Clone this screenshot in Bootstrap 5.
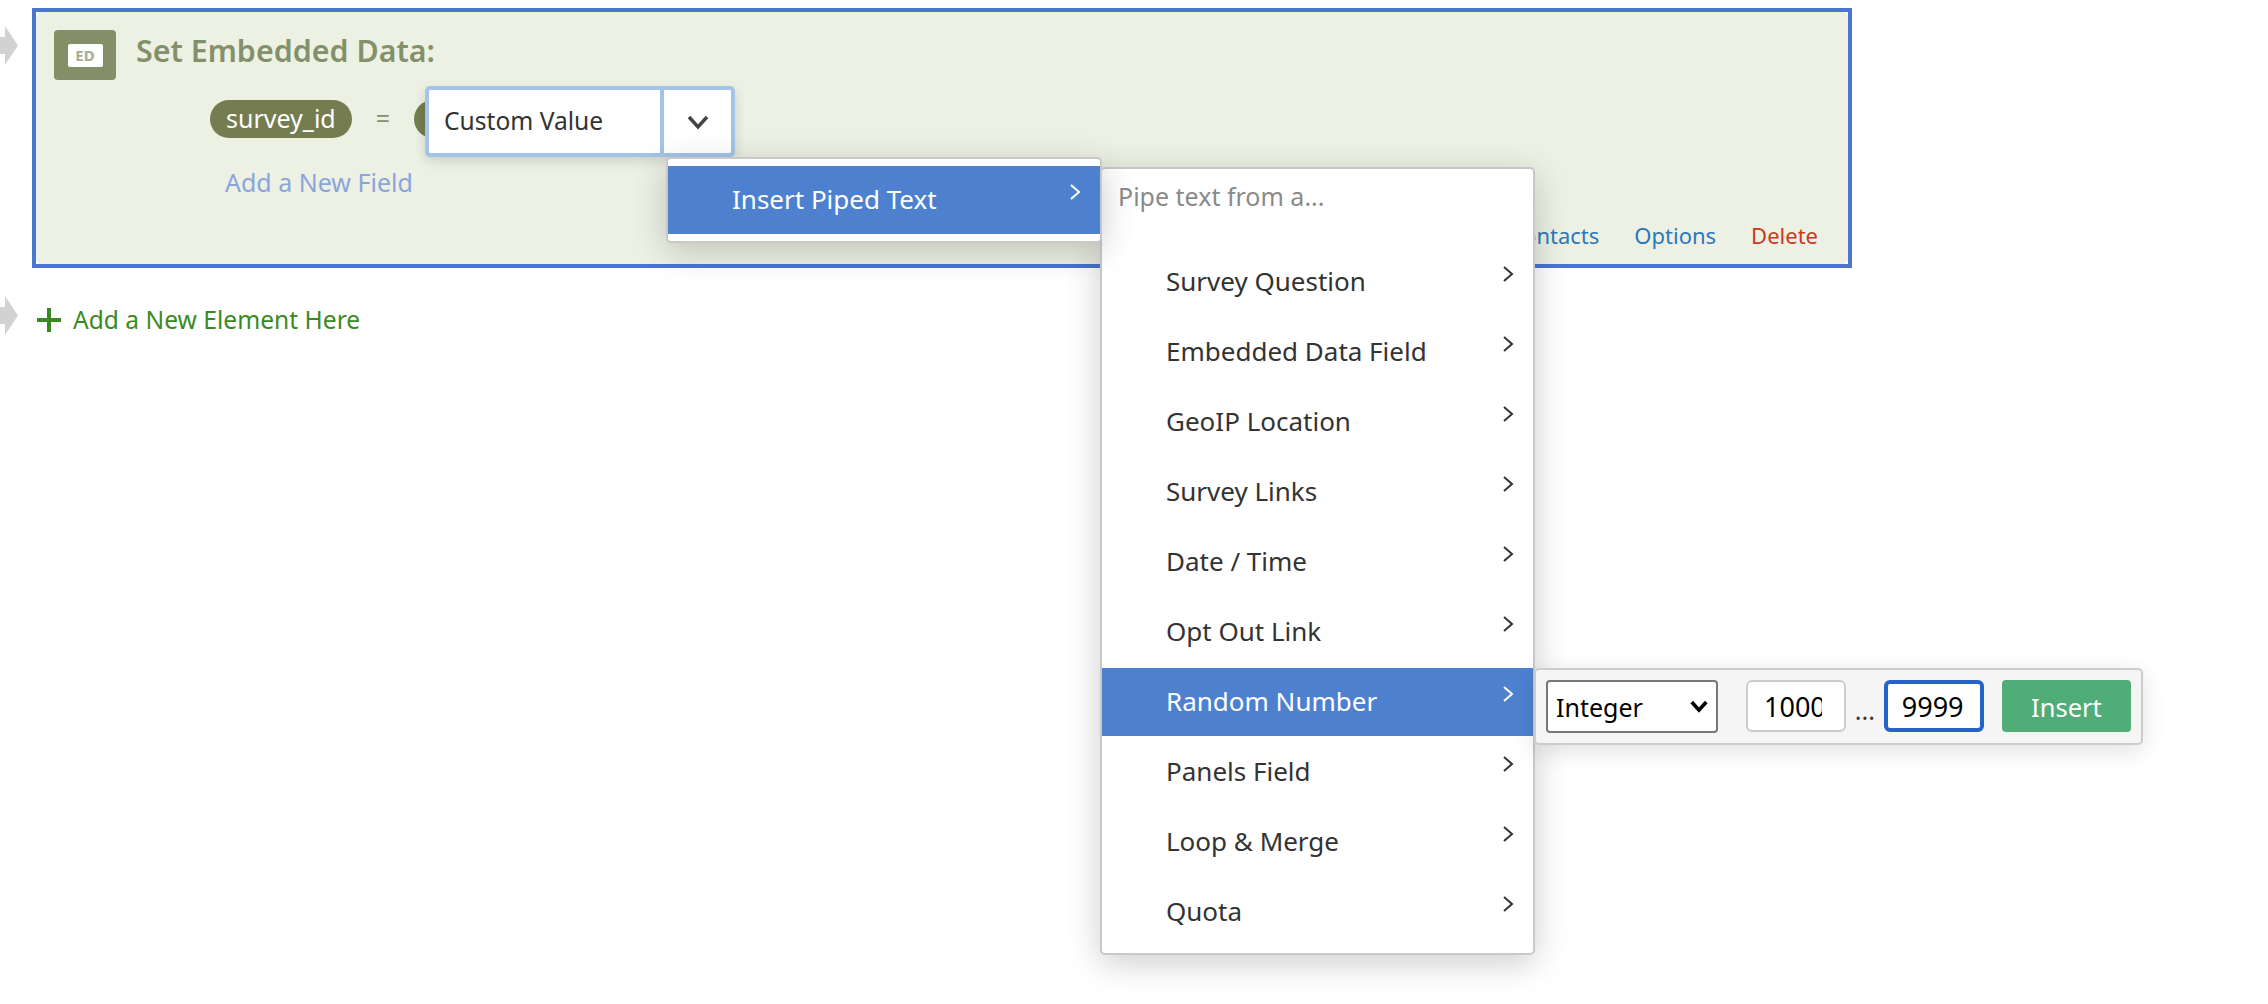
<!DOCTYPE html>
<html lang="en">
<head>
    <meta charset="UTF-8">
    <title>Set Embedded Data</title>
    <link href="https://cdn.jsdelivr.net/npm/bootstrap@5.3.0/dist/css/bootstrap.min.css" rel="stylesheet">
    <style>
        html, body { height: 100%; overflow: hidden; }
        body { font-family: "Noto Sans", "Open Sans", sans-serif; color: #333; background: #fff; }
        .flow-page { position: relative; width: 2268px; height: 1004px; padding-top: 8px; }
        .flow-row { width: 1852px; }
        .flow-arrow { width: 18px; height: 39px; flex: none; margin-right: 14px; fill: #d2d2d2; }
        .flow-arrow-top { margin-top: 18px; }
        .flow-arrow-low { margin-bottom: 8px; }

        .ed-frame { height: 260px; border: 4px solid #4a76d0; background: #fff; }
        .ed-card { height: 100%; border: 0; border-radius: 5px; background: #edf1e4; padding: 18px 30px 14px 18px; }
        .ed-icon { width: 62px; height: 50px; background: #848f68; border-radius: 4px; }
        .ed-icon-label { width: 35px; height: 23px; background: #fff; border-radius: 2px; color: #a4ad8e; font-size: 15px; font-weight: 700; line-height: 23px; text-align: center; }
        .ed-title { margin: 2px 0 0 20px; font-size: 30.400px; font-weight: 600; line-height: 38px; color: #83906a; }
        .field-row { margin: 20px 0 0 156px; height: 38px; }
        .field-pill { height: 38px; padding: 0 16px; border-radius: 19px; background: #747c50; color: #fff; font-size: 25px; line-height: 36px; }
        .field-pill-under { width: 60px; }
        .field-eq { margin: 0 24px; font-size: 25px; color: #83906a; }
        .add-field { display: block; margin: 27px 0 0 171px; font-size: 25px; line-height: 34px; color: #8ba4dc; text-decoration: none; }
        .ed-actions { margin-top: auto; font-size: 22px; line-height: 30px; gap: 35px; }
        .ed-actions a { color: #2b78bd; text-decoration: none; }
        .ed-actions a.del-link { color: #c83a1c; }

        .add-element { margin-top: 28px; }
        .add-element a { color: #3a8a22; font-size: 24.600px; line-height: 34px; text-decoration: none; }
        .add-plus { width: 26px; height: 26px; margin: 0 11px 0 4px; stroke: #3a8a22; }

        .value-box { position: absolute; left: 425px; top: 86px; width: 310px; height: 71px; border: 4px solid #a3c3e8; border-radius: 5px; background: #fff; box-shadow: 0 4px 12px rgba(0,0,0,.14); font-size: 24.600px; color: #333; }
        .value-text { width: 235px; padding-left: 15px; line-height: 61px; border-right: 4px solid #a3c3e8; }
        .value-caret { flex: 1; }
        .value-caret svg { width: 24px; height: 16px; stroke: #444; }

        .pipe-menu.dropdown-menu { position: absolute; display: block; margin: 0; min-width: 0; border: 2px solid #c8c8c8; border-radius: 5px; box-shadow: 0 8px 34px rgba(0,0,0,.2); padding: 0; background: #fff; }
        .pipe-first { left: 666px; top: 157px; width: 436px; height: 86px; padding-top: 7px !important; z-index: 3; }
        .pipe-second { left: 1100px; top: 167px; width: 435px; height: 788px; padding-top: 79px !important; z-index: 2; }
        .pipe-search { position: absolute; left: 16px; top: -2px; width: 400px; height: 58px; padding: 0; border: 0; box-shadow: none !important; font-size: 25px; color: #333; background: transparent; }
        .pipe-search::placeholder { color: #8a8a8a; opacity: 1; }
        .pipe-item.dropdown-item { display: flex; align-items: flex-start; justify-content: space-between; height: 68px; margin-bottom: 2px; padding: 11px 19px 0 64px; font-size: 26px; line-height: 44px; color: #333; }
        .pipe-item svg { width: 12px; height: 18px; margin-top: 6px; stroke: currentColor; flex: none; }
        .pipe-item.active { background: #4d81d0; color: #fff; }

        .random-pop { position: absolute; left: 1534px; top: 668px; width: 609px; height: 77px; padding: 10px; background: #f5f5f5; border: 2px solid #ccc; border-radius: 5px; box-shadow: 0 6px 24px rgba(0,0,0,.12); z-index: 4; font-size: 25px; }
        .random-type.form-select { width: 172px; height: 53px; flex: none; margin-right: 28px; padding: 6px 8px 4px; border: 2px solid #777; border-radius: 4px; color: #000; font-size: 25px; background-image: url("data:image/svg+xml,%3csvg xmlns='http://www.w3.org/2000/svg' viewBox='0 0 22 16'%3e%3cpath fill='none' stroke='%23000' stroke-width='4' d='M3 3l8 9 8-9'/%3e%3c/svg%3e"); background-position: right 7px center; background-size: 20px 15px; }
        .random-num.form-control { width: 100px; height: 52px; flex: none; padding: 4px 22px 4px 16px; border: 2px solid #ccc; border-radius: 6px; color: #000; font-size: 27px; }
        .random-num.is-on { border: 4px solid #2563c9; padding: 4px 14px; box-shadow: none; }
        .random-dots { width: 38px; text-align: center; color: #333; line-height: 60px; }
        .random-go.btn { width: 130px; height: 52px; margin-left: 18px; padding: 2px 0 0; border: 0; border-radius: 4px; background: #50ad78; color: #fff; font-size: 25.500px; }
    </style>
</head>
<body>
    <div class="flow-page">
        <div class="flow-row d-flex align-items-start">
            <svg class="flow-arrow flow-arrow-top" viewBox="0 0 18 39"><path d="M0 11H5V0L18 19.500 5 39V28H0Z"/></svg>
            <div class="ed-frame flex-grow-1">
                <div class="card ed-card">
                    <div class="d-flex align-items-start">
                        <div class="ed-icon d-flex align-items-center justify-content-center"><div class="ed-icon-label">ED</div></div>
                        <h2 class="ed-title">Set Embedded Data:</h2>
                    </div>
                    <div class="field-row d-flex align-items-center">
                        <span class="field-pill">survey_id</span>
                        <span class="field-eq">=</span>
                        <span class="field-pill field-pill-under"></span>
                    </div>
                    <a href="#" class="add-field">Add a New Field</a>
                    <div class="ed-actions d-flex justify-content-end">
                        <a href="#">Contacts</a>
                        <a href="#">Options</a>
                        <a href="#" class="del-link">Delete</a>
                    </div>
                </div>
            </div>
        </div>

        <div class="flow-row add-element d-flex align-items-center">
            <svg class="flow-arrow flow-arrow-low" viewBox="0 0 18 39"><path d="M0 11H5V0L18 19.500 5 39V28H0Z"/></svg>
            <a href="#" class="d-flex align-items-center">
                <svg class="add-plus" viewBox="0 0 26 26" fill="none" stroke-width="4"><path d="M13 1V25M1 13H25"/></svg>
                Add a New Element Here
            </a>
        </div>

        <div class="value-box d-flex">
            <div class="value-text">Custom Value</div>
            <div class="value-caret d-flex align-items-center justify-content-center">
                <svg viewBox="0 0 24 16" fill="none" stroke-width="3.500"><path d="M3 3L12 13L21 3"/></svg>
            </div>
        </div>

        <div class="dropdown-menu pipe-menu pipe-first">
            <a href="#" class="dropdown-item pipe-item active">Insert Piped Text
                <svg viewBox="0 0 12 18" fill="none" stroke-width="2"><path d="M2 2L10 9L2 16"/></svg>
            </a>
        </div>

        <div class="dropdown-menu pipe-menu pipe-second" id="pipeList">
            <input class="form-control pipe-search" placeholder="Pipe text from a...">
        </div>

        <div class="random-pop d-flex align-items-start">
            <select class="form-select random-type"><option>Integer</option></select>
            <input class="form-control random-num" value="1000">
            <span class="random-dots">...</span>
            <input class="form-control random-num is-on" value="9999">
            <button class="btn random-go">Insert</button>
        </div>
    </div>
    <script>
        const items = ["Survey Question", "Embedded Data Field", "GeoIP Location", "Survey Links", "Date / Time", "Opt Out Link", "Random Number", "Panels Field", "Loop & Merge", "Quota"];
        const chevron = '<svg viewBox="0 0 12 18" fill="none" stroke-width="2"><path d="M2 2L10 9L2 16"/></svg>';
        const lista = document.getElementById("pipeList");
        items.forEach((nombre) => {
            const a = document.createElement("a");
            a.href = "#";
            a.className = "dropdown-item pipe-item" + (nombre === "Random Number" ? " active" : "");
            a.textContent = nombre;
            a.insertAdjacentHTML("beforeend", chevron);
            lista.appendChild(a);
        });
    </script>
    <script src="https://cdn.jsdelivr.net/npm/bootstrap@5.3.0/dist/js/bootstrap.bundle.min.js"></script>
</body>
</html>
